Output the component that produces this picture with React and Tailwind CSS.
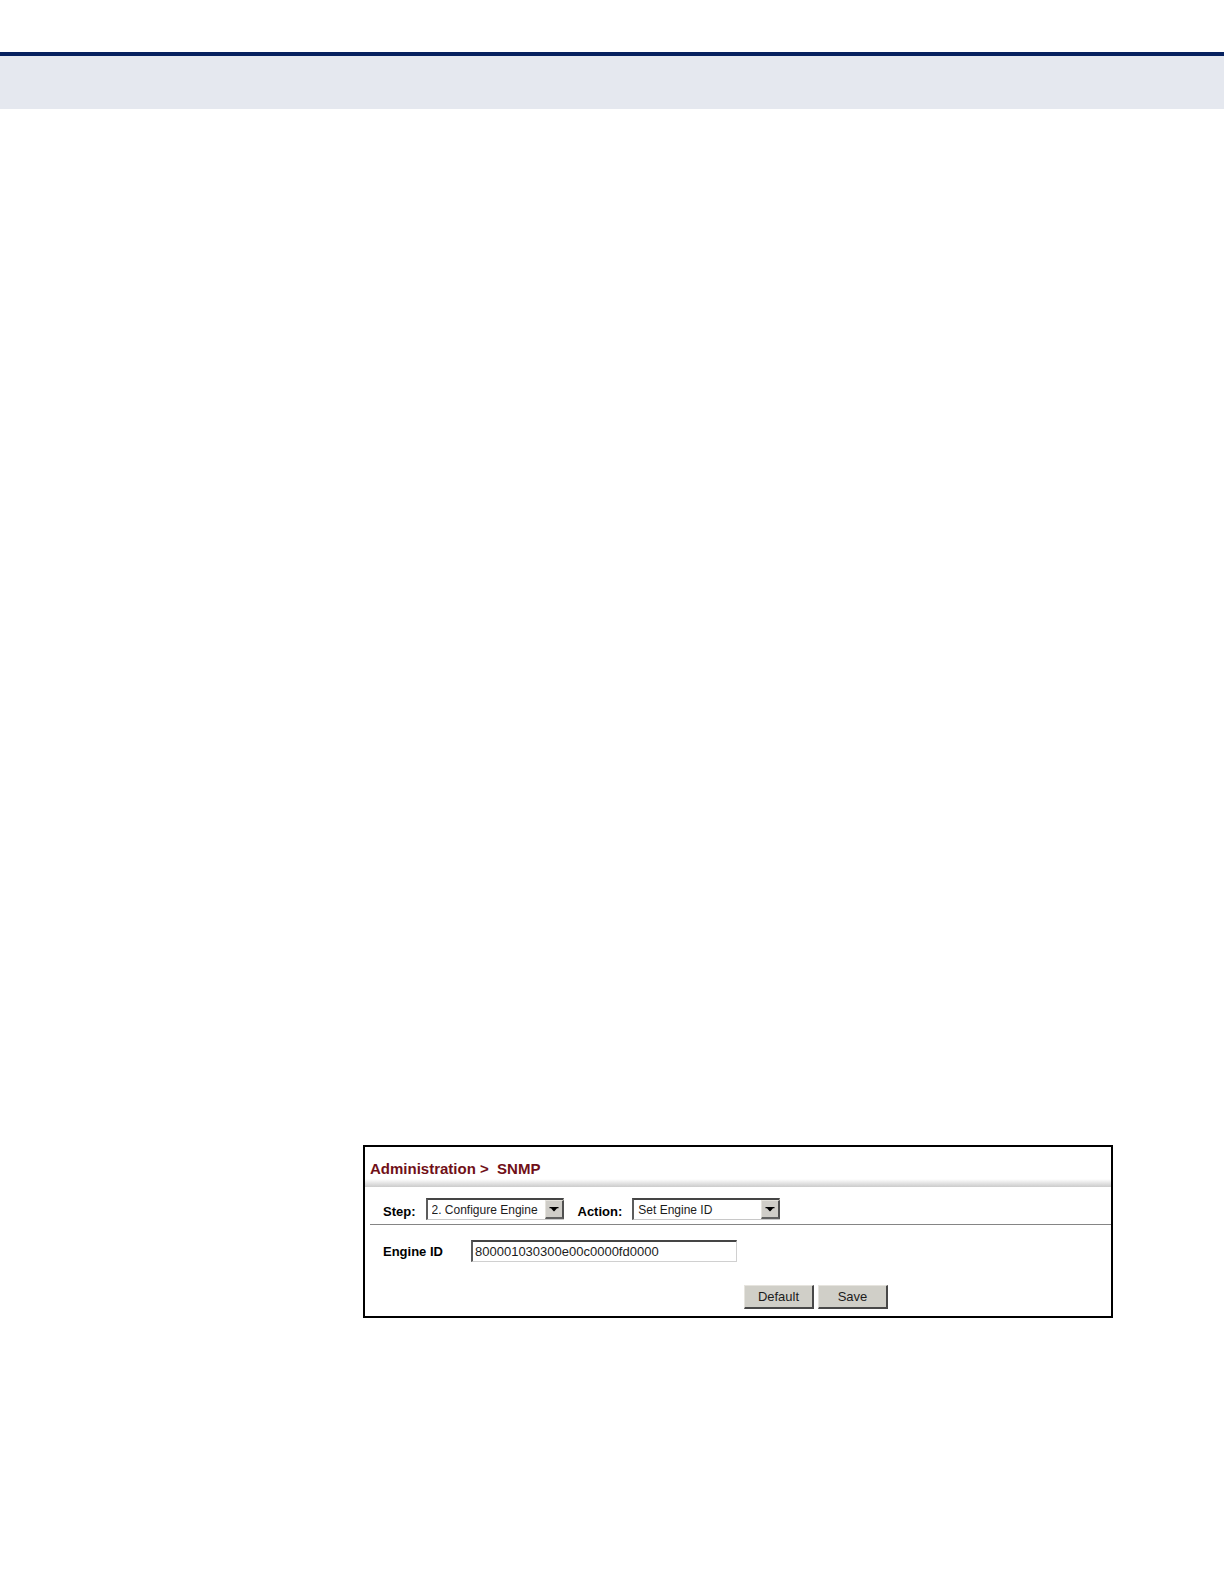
import { useState } from "react";

const DEFAULT_ENGINE_ID = "800001030300e00c0000fd0000";

const steps = ["1. Configure Global", "2. Configure Engine", "3. Configure View"];
const actions = ["Set Engine ID", "Add Remote Engine", "Show Remote Engine"];

function SelectField({ id, label, options, value, onChange, className }) {
  return (
    <div className="flex items-start">
      <label htmlFor={id} className="pt-1 text-[13px] leading-5 font-bold">
        {label}
      </label>
      <div className={`relative ml-[10px] ${className}`}>
        <select
          id={id}
          value={value}
          onChange={(event) => onChange(event.target.value)}
          className="block h-[22px] w-full appearance-none border-t-2 border-r border-b border-l-2 border-t-[#454545] border-r-[#d4d0c8] border-b-[#c8c8c8] border-l-[#5c5c5c] bg-white pr-5 pl-1 text-xs text-[#1c1c1c] outline-none"
        >
          {options.map((option) => (
            <option key={option}>{option}</option>
          ))}
        </select>
        <span
          aria-hidden="true"
          className="pointer-events-none absolute top-[2px] right-0 flex h-[19px] w-[19px] items-center justify-center border-t border-r-2 border-b-2 border-l border-t-[#e4e2dc] border-r-[#505050] border-b-[#606060] border-l-[#e4e2dc] bg-[#cfcdc8]"
        >
          <svg width="10" height="5" viewBox="0 0 10 5">
            <path d="M0.5 0h9v1.2H8L5.4 4.2h-.8L2 1.2H.5z" fill="#000" />
          </svg>
        </span>
      </div>
    </div>
  );
}

function PanelButton({ children, ...props }) {
  return (
    <button
      className="h-6 w-[70px] border-t border-r-2 border-b-2 border-l border-t-[#e6e4de] border-r-[#484848] border-b-[#484848] border-l-[#e6e4de] bg-[#d0cfc8] text-[13px] leading-5 text-[#1c1c1c]"
      {...props}
    >
      {children}
    </button>
  );
}

function App() {
  const [step, setStep] = useState(steps[1]);
  const [action, setAction] = useState(actions[0]);
  const [engineId, setEngineId] = useState(DEFAULT_ENGINE_ID);

  return (
    <div className="flex min-h-screen flex-col bg-white font-['Liberation_Sans',Arial,sans-serif] text-black">
      <header className="mt-[52px] h-[57px] shrink-0 border-t-4 border-[#06215f] bg-[#e5e8ef]" />

      <main className="flex flex-1 flex-col justify-end pr-[111px] pb-[266px] pl-[363px]">
        <form className="border-2 border-black pb-[7px]" onSubmit={(event) => event.preventDefault()}>
          <h1 className="pt-3 pl-[5px] text-[15px] leading-5 font-bold whitespace-pre text-[#701018]">
            {"Administration >  SNMP"}
          </h1>
          <div className="h-2 bg-linear-to-b from-white to-[#cbcbcb]" />

          <div className="ml-[5px] flex gap-[14px] border-b border-[#858585] pt-[11px] pb-[2px] pl-[13px]">
            <SelectField
              id="step"
              label="Step:"
              options={steps}
              value={step}
              onChange={setStep}
              className="w-[138px]"
            />
            <SelectField
              id="action"
              label="Action:"
              options={actions}
              value={action}
              onChange={setAction}
              className="w-[148px]"
            />
          </div>

          <div className="flex items-end pt-[15px] pl-[18px]">
            <label htmlFor="engine-id" className="w-[88px] text-[13px] leading-5 font-bold">
              Engine ID
            </label>
            <input
              id="engine-id"
              type="text"
              value={engineId}
              onChange={(event) => setEngineId(event.target.value)}
              className="h-[22px] w-[266px] border-t-2 border-r border-b border-l-2 border-t-[#454545] border-r-[#d0d0d0] border-b-[#d0d0d0] border-l-[#5c5c5c] bg-white pl-[2px] text-[13px] text-[#1c1c1c] outline-none"
            />
          </div>

          <div className="flex gap-1 pt-[23px] pl-[379px]">
            <PanelButton type="button" onClick={() => setEngineId(DEFAULT_ENGINE_ID)}>
              Default
            </PanelButton>
            <PanelButton type="submit">Save</PanelButton>
          </div>
        </form>
      </main>
    </div>
  );
}

export default App;
